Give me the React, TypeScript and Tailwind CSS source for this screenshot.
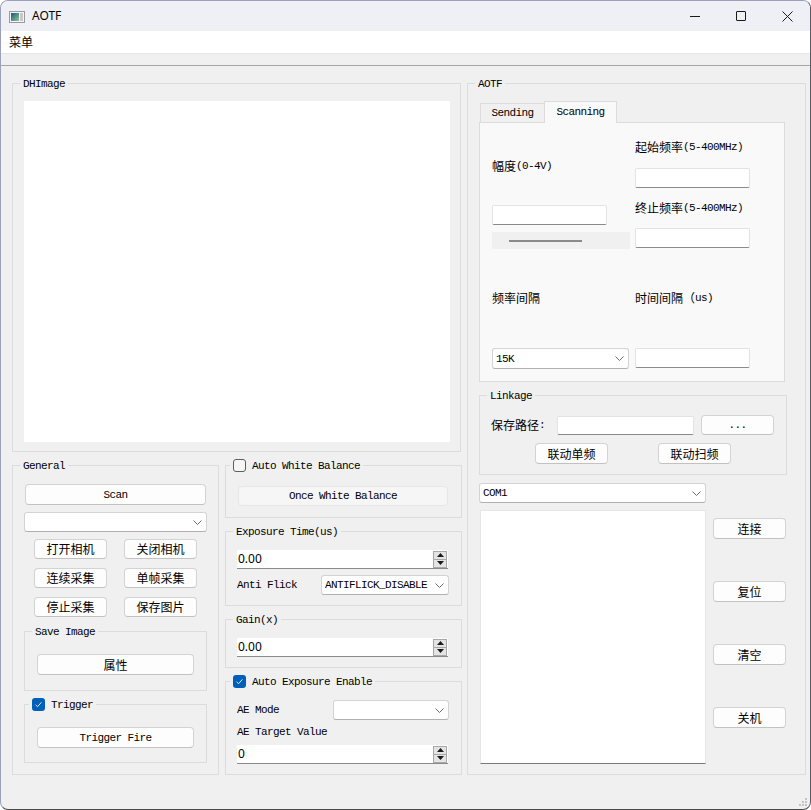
import React from "react";

const mono = "[font-family:'Liberation_Mono',monospace] text-[11px] tracking-[-0.6px] leading-[16px] text-black whitespace-pre";
const cjk = "[font-family:'Noto_Sans_CJK_SC',sans-serif] text-[12px] leading-[16px] text-black whitespace-pre";
const sans = "[font-family:'Noto_Sans',sans-serif] text-[12px] leading-[16px] text-black";

function Chevron() {
  return (
    <svg width="9" height="5" viewBox="0 0 9 5" className="shrink-0">
      <path d="M0.5 0.5 L4.5 4.5 L8.5 0.5" stroke="#6b6b6b" strokeWidth="1" fill="none" />
    </svg>
  );
}

function Btn({ children, className = "" }: { children?: React.ReactNode; className?: string }) {
  return (
    <div className={`flex items-center justify-center shrink-0 bg-[#fdfdfd] border border-[#d3d3d3] border-b-[#c2c2c2] rounded-[4px] ${className}`}>
      {children}
    </div>
  );
}

function Combo({ text = "", className = "" }: { text?: string; className?: string }) {
  return (
    <div className={`flex items-center shrink-0 bg-white border border-[#d3d3d3] border-b-[#b0b0b0] rounded-[3px] pl-[3px] pr-[4px] ${className}`}>
      <span className={`flex-1 ${mono}`}>{text}</span>
      <Chevron />
    </div>
  );
}

function Edit({ className = "" }: { className?: string }) {
  return <div className={`shrink-0 bg-white border border-[#e3e3e3] border-b-[#8a8a8a] rounded-[2px] ${className}`} />;
}

function Spin({ value, className = "" }: { value: string; className?: string }) {
  return (
    <div className={`flex items-center shrink-0 bg-white border-b border-[#8a8a8a] pr-[1px] ${className}`}>
      <span className={`flex-1 pl-[1px] ${sans}`}>{value}</span>
      <div className="flex flex-col w-[14px] h-[17px]">
        <div className="h-[9px] flex items-center justify-center bg-[#e4e4e4] border border-[#a8a8a8]">
          <svg width="7" height="4" viewBox="0 0 7 4">
            <path d="M3.5 0 L7 4 L0 4 Z" fill="#1a1a1a" />
          </svg>
        </div>
        <div className="h-[8px] flex items-center justify-center bg-[#e4e4e4] border border-t-0 border-[#a8a8a8]">
          <svg width="7" height="4" viewBox="0 0 7 4">
            <path d="M0 0 L7 0 L3.5 4 Z" fill="#1a1a1a" />
          </svg>
        </div>
      </div>
    </div>
  );
}

function Check({ checked }: { checked: boolean }) {
  return checked ? (
    <div className="w-[13px] h-[13px] rounded-[3px] bg-[#005fb8] flex items-center justify-center shrink-0">
      <svg width="9" height="9" viewBox="0 0 9 9">
        <path d="M1.6 4.8 L3.6 6.7 L7.4 2.3" stroke="#dce9f7" strokeWidth="1" fill="none" />
      </svg>
    </div>
  ) : (
    <div className="w-[13px] h-[13px] rounded-[3px] border border-[#5e5e5e] bg-[#f6f6f6] shrink-0" />
  );
}

function Group({
  title,
  check,
  className = "",
  children,
}: {
  title: string;
  check?: boolean;
  className?: string;
  children?: React.ReactNode;
}) {
  return (
    <div className={`relative shrink-0 border border-[#dcdcdc] flex flex-col ${className}`}>
      {check === undefined ? (
        <div className={`absolute left-[7px] top-[-8px] px-[3px] bg-[#f0f0f0] ${mono}`}>{title}</div>
      ) : (
        <div className="absolute left-[4px] top-[-9px] px-[3px] bg-[#f0f0f0] flex items-center gap-[6px] h-[16px]">
          <Check checked={check} />
          <span className={`pt-[1px] ${mono}`}>{title}</span>
        </div>
      )}
      {children}
    </div>
  );
}

export default function App() {
  return (
    <div className="w-[811px] h-[810px] flex flex-col bg-[#f0f0f0] border border-[#9aa0bb] border-r-[#5a5a64] border-b-[#4a4a4a] rounded-[8px] overflow-hidden relative">
      {/* Title bar */}
      <div className="h-[30px] shrink-0 flex items-center bg-[#eff0f6]">
        <div className="ml-[8px] mt-[1px]">
          <svg width="16" height="12" viewBox="0 0 16 12">
            <defs>
              <linearGradient id="ic" x1="0" y1="0" x2="1" y2="1">
                <stop offset="0" stopColor="#1e5876" />
                <stop offset="1" stopColor="#8ec79e" />
              </linearGradient>
            </defs>
            <rect x="0.5" y="0.5" width="15" height="11" fill="#f4f4f4" stroke="#9a9a9a" />
            <rect x="2" y="2" width="8" height="8" fill="url(#ic)" />
            <rect x="11" y="2" width="3" height="8" fill="#c8c8c8" />
          </svg>
        </div>
        <span className={`ml-[7px] ${sans}`}>AOTF</span>
        <div className="flex-1" />
        <div className="w-[46px] h-full flex items-center justify-center">
          <div className="w-[10px] h-[1px] bg-[#1a1a1a]" />
        </div>
        <div className="w-[46px] h-full flex items-center justify-center">
          <div className="w-[10px] h-[10px] border border-[#1a1a1a] rounded-[1px]" />
        </div>
        <div className="w-[46px] h-full flex items-center justify-center">
          <svg width="11" height="11" viewBox="0 0 11 11">
            <path d="M0.5 0.5 L10.5 10.5 M10.5 0.5 L0.5 10.5" stroke="#1a1a1a" strokeWidth="1" />
          </svg>
        </div>
      </div>

      {/* Menu bar */}
      <div className="h-[22px] shrink-0 bg-white flex items-center pl-[8px]">
        <span className={cjk}>菜单</span>
      </div>
      {/* Toolbar strip */}
      <div className="h-[13px] shrink-0 bg-[#f0f0f0] border-t border-[#e6e6e6] border-b border-b-[#a6a6a6]" />

      {/* Main */}
      <div className="flex-1 flex pt-[17px] pl-[11px]">
        {/* Left column */}
        <div className="w-[450px] shrink-0 flex flex-col">
          <Group title="DHImage" className="w-[449px] h-[369px]">
            <div className="ml-[11px] mt-[17px] w-[426px] h-[341px] bg-white" />
          </Group>

          <div className="mt-[13px] flex gap-[6px]">
            {/* General */}
            <Group title="General" className="w-[207px] h-[310px]">
              <Btn className="ml-[12px] mt-[18px] w-[181px] h-[21px]">
                <span className={mono}>Scan</span>
              </Btn>
              <Combo className="ml-[11px] mt-[7px] w-[183px] h-[20px]" />
              <div className="ml-[21px] mt-[7px] grid grid-cols-[73px_73px] gap-x-[17px] gap-y-[9px]">
                <Btn className="h-[20px]"><span className={cjk}>打开相机</span></Btn>
                <Btn className="h-[20px]"><span className={cjk}>关闭相机</span></Btn>
                <Btn className="h-[20px]"><span className={cjk}>连续采集</span></Btn>
                <Btn className="h-[20px]"><span className={cjk}>单帧采集</span></Btn>
                <Btn className="h-[20px]"><span className={cjk}>停止采集</span></Btn>
                <Btn className="h-[20px]"><span className={cjk}>保存图片</span></Btn>
              </div>
              <Group title="Save Image" className="ml-[11px] mt-[14px] w-[183px] h-[60px]">
                <Btn className="ml-[12px] mt-[22px] w-[157px] h-[21px]">
                  <span className={cjk}>属性</span>
                </Btn>
              </Group>
              <Group title="Trigger" check={true} className="ml-[11px] mt-[13px] w-[183px] h-[59px]">
                <Btn className="ml-[12px] mt-[22px] w-[157px] h-[21px]">
                  <span className={mono}>Trigger Fire</span>
                </Btn>
              </Group>
            </Group>

            {/* Middle column */}
            <div className="w-[237px] flex flex-col">
              <Group title="Auto White Balance" check={false} className="w-[237px] h-[53px]">
                <div className="ml-[12px] mt-[20px] w-[210px] h-[20px] flex items-center justify-center bg-[#f6f6f6] border border-[#e6e6e6] rounded-[4px]">
                  <span className={`${mono} text-[#9a9a9a]`}>Once White Balance</span>
                </div>
              </Group>

              <Group title="Exposure Time(us)" className="mt-[13px] w-[237px] h-[75px]">
                <Spin value="0.00" className="ml-[11px] mt-[18px] w-[211px] h-[19px]" />
                <div className="ml-[11px] mt-[6px] flex items-center">
                  <span className={`w-[84px] ${mono}`}>Anti Flick</span>
                  <Combo text="ANTIFLICK_DISABLE" className="w-[128px] h-[20px]" />
                </div>
              </Group>

              <Group title="Gain(x)" className="mt-[13px] w-[237px] h-[49px]">
                <Spin value="0.00" className="ml-[11px] mt-[18px] w-[211px] h-[19px]" />
              </Group>

              <Group title="Auto Exposure Enable" check={true} className="mt-[13px] w-[237px] h-[94px]">
                <div className="ml-[11px] mt-[18px] flex items-center">
                  <span className={`w-[96px] ${mono}`}>AE Mode</span>
                  <Combo className="w-[116px] h-[20px]" />
                </div>
                <span className={`ml-[11px] mt-[4px] ${mono}`}>AE Target Value</span>
                <Spin value="0" className="ml-[11px] mt-[5px] w-[211px] h-[19px]" />
              </Group>
            </div>
          </div>
        </div>

        {/* AOTF */}
        <Group title="AOTF" className="ml-[5px] w-[339px] h-[692px]">
          {/* tabs */}
          <div className="ml-[12px] mt-[17px] flex items-end h-[21px]">
            <div className="w-[64px] h-[19px] flex items-center justify-center bg-[#f0f0f0] border-t border-l border-[#dcdcdc]">
              <span className={mono}>Sending</span>
            </div>
            <div className="relative z-10 w-[73px] h-[22px] mb-[-1px] flex items-start pt-[2px] justify-center bg-[#f9f9f9] border-t border-l border-r border-[#dcdcdc]">
              <span className={mono}>Scanning</span>
            </div>
          </div>
          <div className="ml-[11px] w-[306px] h-[260px] bg-[#f9f9f9] border border-[#dcdcdc] flex">
            {/* left col */}
            <div className="ml-[12px] w-[138px] flex flex-col">
              <div className="mt-[35px] flex">
                <span className={cjk}>幅度</span>
                <span className={mono}>(0-4V)</span>
              </div>
              <Edit className="mt-[31px] w-[115px] h-[20px]" />
              <div className="mt-[7px] w-[138px] h-[17px] bg-[#f0f0f0] flex items-center">
                <div className="ml-[17px] w-[73px] h-[2px] bg-[#8a8a8a]" />
              </div>
              <span className={`mt-[41px] ${cjk}`}>频率间隔</span>
              <Combo text="15K" className="mt-[42px] w-[137px] h-[21px]" />
            </div>
            {/* right col */}
            <div className="ml-[5px] w-[115px] flex flex-col">
              <div className="mt-[16px] flex">
                <span className={cjk}>起始频率</span>
                <span className={mono}>(5-400MHz)</span>
              </div>
              <Edit className="mt-[13px] w-[115px] h-[20px]" />
              <div className="mt-[12px] flex">
                <span className={cjk}>终止频率</span>
                <span className={mono}>(5-400MHz)</span>
              </div>
              <Edit className="mt-[12px] w-[115px] h-[20px]" />
              <div className="mt-[42px] flex">
                <span className={cjk}>时间间隔（</span>
                <span className={mono}>us)</span>
              </div>
              <Edit className="mt-[42px] w-[115px] h-[20px]" />
            </div>
          </div>

          {/* Linkage */}
          <Group title="Linkage" className="ml-[11px] mt-[13px] w-[308px] h-[80px]">
            <div className="ml-[11px] mt-[19px] flex items-center">
              <div className="w-[66px] flex">
                <span className={cjk}>保存路径</span>
                <span className={mono}>:</span>
              </div>
              <Edit className="w-[137px] h-[19px]" />
              <Btn className="ml-[7px] w-[73px] h-[20px]">
                <span className={mono}>...</span>
              </Btn>
            </div>
            <div className="ml-[55px] mt-[8px] flex gap-[50px]">
              <Btn className="w-[73px] h-[21px]"><span className={cjk}>联动单频</span></Btn>
              <Btn className="w-[73px] h-[21px]"><span className={cjk}>联动扫频</span></Btn>
            </div>
          </Group>

          <Combo text="COM1" className="ml-[11px] mt-[8px] w-[227px] h-[20px]" />

          <div className="mt-[7px] flex">
            <div className="ml-[12px] w-[226px] h-[254px] bg-white border border-[#e6e6e6] border-b-[#7a7a7a]" />
            <div className="ml-[7px] mt-[8px] flex flex-col gap-[42px]">
              <Btn className="w-[73px] h-[21px]"><span className={cjk}>连接</span></Btn>
              <Btn className="w-[73px] h-[21px]"><span className={cjk}>复位</span></Btn>
              <Btn className="w-[73px] h-[21px]"><span className={cjk}>清空</span></Btn>
              <Btn className="w-[73px] h-[21px]"><span className={cjk}>关机</span></Btn>
            </div>
          </div>
        </Group>
      </div>

      {/* size grip */}
      <svg className="absolute right-[2px] bottom-[2px]" width="9" height="9" viewBox="0 0 9 9">
        <rect x="6" y="0" width="2" height="2" fill="#c4c4c4" />
        <rect x="3" y="3" width="2" height="2" fill="#c4c4c4" />
        <rect x="6" y="3" width="2" height="2" fill="#c4c4c4" />
        <rect x="0" y="6" width="2" height="2" fill="#c4c4c4" />
        <rect x="3" y="6" width="2" height="2" fill="#c4c4c4" />
        <rect x="6" y="6" width="2" height="2" fill="#c4c4c4" />
      </svg>
    </div>
  );
}
